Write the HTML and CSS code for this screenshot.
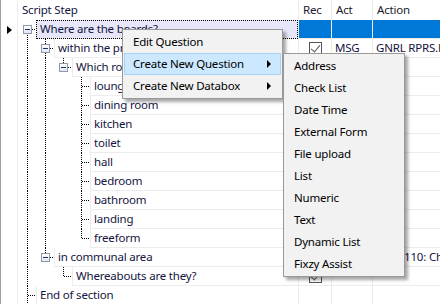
FILE: index.html
```html
<!DOCTYPE html>
<html lang="en">
<head>
    <meta charset="UTF-8">
    <title>Script Steps</title>
    <link rel="stylesheet" href="styles.css">
</head>
<body>
    <div class="grid">
        <div class="head">
            <div class="ind"></div>
            <div class="h-tree">Script Step</div>
            <div class="h-col rec">Rec</div>
            <div class="h-col act">Act</div>
            <div class="h-col action">Action</div>
        </div>

        <div class="row selected">
            <div class="ind"><span class="arrow"></span></div>
            <div class="tree">
                <span class="slot start"><span class="box"></span></span>
                <div class="cell">Where are the boards?</div>
            </div>
            <div class="col rec"></div>
            <div class="col act"></div>
            <div class="col action"></div>
        </div>

        <div class="row">
            <div class="ind"></div>
            <div class="tree">
                <span class="slot pipe"></span>
                <span class="slot tee"><span class="box"></span></span>
                <div class="cell">within the property</div>
            </div>
            <div class="col rec"><span class="check"></span></div>
            <div class="col act">MSG</div>
            <div class="col action">GNRL RPRS.FORM</div>
        </div>

        <div class="row">
            <div class="ind"></div>
            <div class="tree">
                <span class="slot pipe"></span>
                <span class="slot pipe"></span>
                <span class="slot elbow"><span class="box"></span></span>
                <div class="cell">Which room?</div>
            </div>
            <div class="col rec"></div>
            <div class="col act"></div>
            <div class="col action"></div>
        </div>

        <div class="row">
            <div class="ind"></div>
            <div class="tree">
                <span class="slot pipe"></span><span class="slot pipe"></span><span class="slot"></span><span class="slot tee"></span>
                <div class="cell">lounge</div>
            </div>
            <div class="col rec"></div><div class="col act"></div><div class="col action"></div>
        </div>

        <div class="row">
            <div class="ind"></div>
            <div class="tree">
                <span class="slot pipe"></span><span class="slot pipe"></span><span class="slot"></span><span class="slot tee"></span>
                <div class="cell">dining room</div>
            </div>
            <div class="col rec"></div><div class="col act"></div><div class="col action"></div>
        </div>

        <div class="row">
            <div class="ind"></div>
            <div class="tree">
                <span class="slot pipe"></span><span class="slot pipe"></span><span class="slot"></span><span class="slot tee"></span>
                <div class="cell">kitchen</div>
            </div>
            <div class="col rec"></div><div class="col act"></div><div class="col action"></div>
        </div>

        <div class="row">
            <div class="ind"></div>
            <div class="tree">
                <span class="slot pipe"></span><span class="slot pipe"></span><span class="slot"></span><span class="slot tee"></span>
                <div class="cell">toilet</div>
            </div>
            <div class="col rec"></div><div class="col act"></div><div class="col action"></div>
        </div>

        <div class="row">
            <div class="ind"></div>
            <div class="tree">
                <span class="slot pipe"></span><span class="slot pipe"></span><span class="slot"></span><span class="slot tee"></span>
                <div class="cell">hall</div>
            </div>
            <div class="col rec"></div><div class="col act"></div><div class="col action"></div>
        </div>

        <div class="row">
            <div class="ind"></div>
            <div class="tree">
                <span class="slot pipe"></span><span class="slot pipe"></span><span class="slot"></span><span class="slot tee"></span>
                <div class="cell">bedroom</div>
            </div>
            <div class="col rec"></div><div class="col act"></div><div class="col action"></div>
        </div>

        <div class="row">
            <div class="ind"></div>
            <div class="tree">
                <span class="slot pipe"></span><span class="slot pipe"></span><span class="slot"></span><span class="slot tee"></span>
                <div class="cell">bathroom</div>
            </div>
            <div class="col rec"></div><div class="col act"></div><div class="col action"></div>
        </div>

        <div class="row">
            <div class="ind"></div>
            <div class="tree">
                <span class="slot pipe"></span><span class="slot pipe"></span><span class="slot"></span><span class="slot tee"></span>
                <div class="cell">landing</div>
            </div>
            <div class="col rec"></div><div class="col act"></div><div class="col action"></div>
        </div>

        <div class="row">
            <div class="ind"></div>
            <div class="tree">
                <span class="slot pipe"></span><span class="slot pipe"></span><span class="slot"></span><span class="slot elbow"></span>
                <div class="cell">freeform</div>
            </div>
            <div class="col rec"></div><div class="col act"></div><div class="col action"></div>
        </div>

        <div class="row">
            <div class="ind"></div>
            <div class="tree">
                <span class="slot pipe"></span>
                <span class="slot elbow"><span class="box"></span></span>
                <div class="cell">in communal area</div>
            </div>
            <div class="col rec"></div>
            <div class="col act"></div>
            <div class="col action">ELEC 110: Check</div>
        </div>

        <div class="row">
            <div class="ind"></div>
            <div class="tree">
                <span class="slot pipe"></span><span class="slot"></span><span class="slot elbow"></span>
                <div class="cell">Whereabouts are they?</div>
            </div>
            <div class="col rec"><span class="check"></span></div>
            <div class="col act"></div>
            <div class="col action"></div>
        </div>

        <div class="row">
            <div class="ind"></div>
            <div class="tree">
                <span class="slot tee"></span>
                <div class="cell">End of section</div>
            </div>
            <div class="col rec"></div>
            <div class="col act"></div>
            <div class="col action"></div>
        </div>
    </div>

    <!-- context menu -->
    <div class="menu main-menu">
        <div class="item">Edit Question</div>
        <div class="item hot">Create New Question<span class="sub-arrow"></span></div>
        <div class="item">Create New Databox<span class="sub-arrow"></span></div>
    </div>

    <div class="menu sub-menu">
        <div class="item">Address</div>
        <div class="item">Check List</div>
        <div class="item">Date Time</div>
        <div class="item">External Form</div>
        <div class="item">File upload</div>
        <div class="item">List</div>
        <div class="item">Numeric</div>
        <div class="item">Text</div>
        <div class="item">Dynamic List</div>
        <div class="item">Fixzy Assist</div>
    </div>
</body>
</html>
```

FILE: styles.css
```css
* {
    margin: 0;
    padding: 0;
    box-sizing: border-box;
}

body {
    width: 440px;
    height: 304px;
    overflow: hidden;
    background: #fff;
    font-family: "Noto Sans", "Open Sans", sans-serif;
    font-size: 11.5px;
    letter-spacing: -0.2px;
    color: #141440;
    position: relative;
}

.grid {
    border-left: 1px solid #a0a0a0;
    height: 304px;
}

.head,
.row {
    display: flex;
    height: 19px;
    white-space: nowrap;
}

.head {
    height: 20px;
    line-height: 20px;
}

.ind {
    width: 17px;
    flex: none;
    border-right: 1px solid #ececec;
    display: flex;
    align-items: center;
    justify-content: center;
}

.arrow {
    border-left: 5px solid #000;
    border-top: 4px solid transparent;
    border-bottom: 4px solid transparent;
}

.h-tree {
    width: 280px;
    flex: none;
    padding-left: 4px;
}

.h-col {
    flex: none;
    border-left: 1px solid #ececec;
    padding-left: 4px;
    color: #1a1a2a;
}

.rec { width: 33px; }
.act { width: 41px; }
.action { width: 68px; overflow: hidden; }

/* tree column */
.tree {
    width: 280px;
    flex: none;
    display: flex;
}

.slot {
    width: 18px;
    height: 19px;
    flex: none;
    position: relative;
}

.slot::before,
.slot::after {
    content: "";
    position: absolute;
}

.pipe::before,
.tee::before,
.elbow::before,
.start::before {
    left: 9px;
    width: 1px;
    background-image: linear-gradient(#000 50%, transparent 50%);
    background-size: 1px 2px;
}

.pipe::before,
.tee::before {
    top: 0;
    height: 19px;
}

.elbow::before {
    top: 0;
    height: 10px;
}

.start::before {
    top: 9px;
    height: 10px;
}

.tee::after,
.elbow::after,
.start::after {
    left: 10px;
    top: 9px;
    width: 8px;
    height: 1px;
    background-image: linear-gradient(to right, #000 50%, transparent 50%);
    background-size: 2px 1px;
}

.box {
    position: absolute;
    left: 5px;
    top: 5px;
    width: 9px;
    height: 9px;
    border: 1px solid #8e98aa;
    background: linear-gradient(#fff, #e4e7ef);
    z-index: 1;
}

.box::after {
    content: "";
    position: absolute;
    left: 1px;
    top: 3px;
    width: 5px;
    height: 1px;
    background: #1e3470;
}

.cell {
    flex: 1;
    height: 19px;
    line-height: 18px;
    padding-left: 3px;
    border-left: 1px solid #ececec;
    border-bottom: 1px solid #ececec;
    overflow: hidden;
}

.col {
    flex: none;
    height: 19px;
    line-height: 18px;
    padding-left: 3px;
    border-left: 1px solid #ececec;
    border-bottom: 1px solid #ececec;
    display: flex;
    align-items: center;
}

.col.rec {
    justify-content: center;
    padding-left: 0;
}

.selected .cell {
    background: #e6e6f8;
    outline: 1px dotted #000;
    outline-offset: -1px;
}

.selected .col {
    background: #0078d7;
}

.check {
    width: 13px;
    height: 13px;
    border: 1px solid #555;
    background: #fff;
    position: relative;
}

.check::after {
    content: "";
    position: absolute;
    left: 3px;
    top: 0px;
    width: 4px;
    height: 8px;
    border-right: 1px solid #555;
    border-bottom: 1px solid #555;
    transform: rotate(40deg);
}

/* popup menus */
.menu {
    position: absolute;
    background: #f2f2f2;
    border: 1px solid #999;
    padding: 1px;
    box-shadow: 3px 3px 3px rgba(0, 0, 0, 0.35);
    color: #000;
    z-index: 5;
}

.main-menu {
    left: 122px;
    top: 29px;
    width: 161px;
}

.sub-menu {
    left: 283px;
    top: 53px;
    width: 122px;
}

.item {
    height: 22px;
    line-height: 22px;
    padding-left: 9px;
    position: relative;
    white-space: nowrap;
}

.item.hot {
    background: #cce8ff;
    box-shadow: inset 0 0 0 1px #a8d3f7;
}

.sub-arrow {
    position: absolute;
    right: 10px;
    top: 7px;
    border-left: 4px solid #000;
    border-top: 4px solid transparent;
    border-bottom: 4px solid transparent;
}
```
